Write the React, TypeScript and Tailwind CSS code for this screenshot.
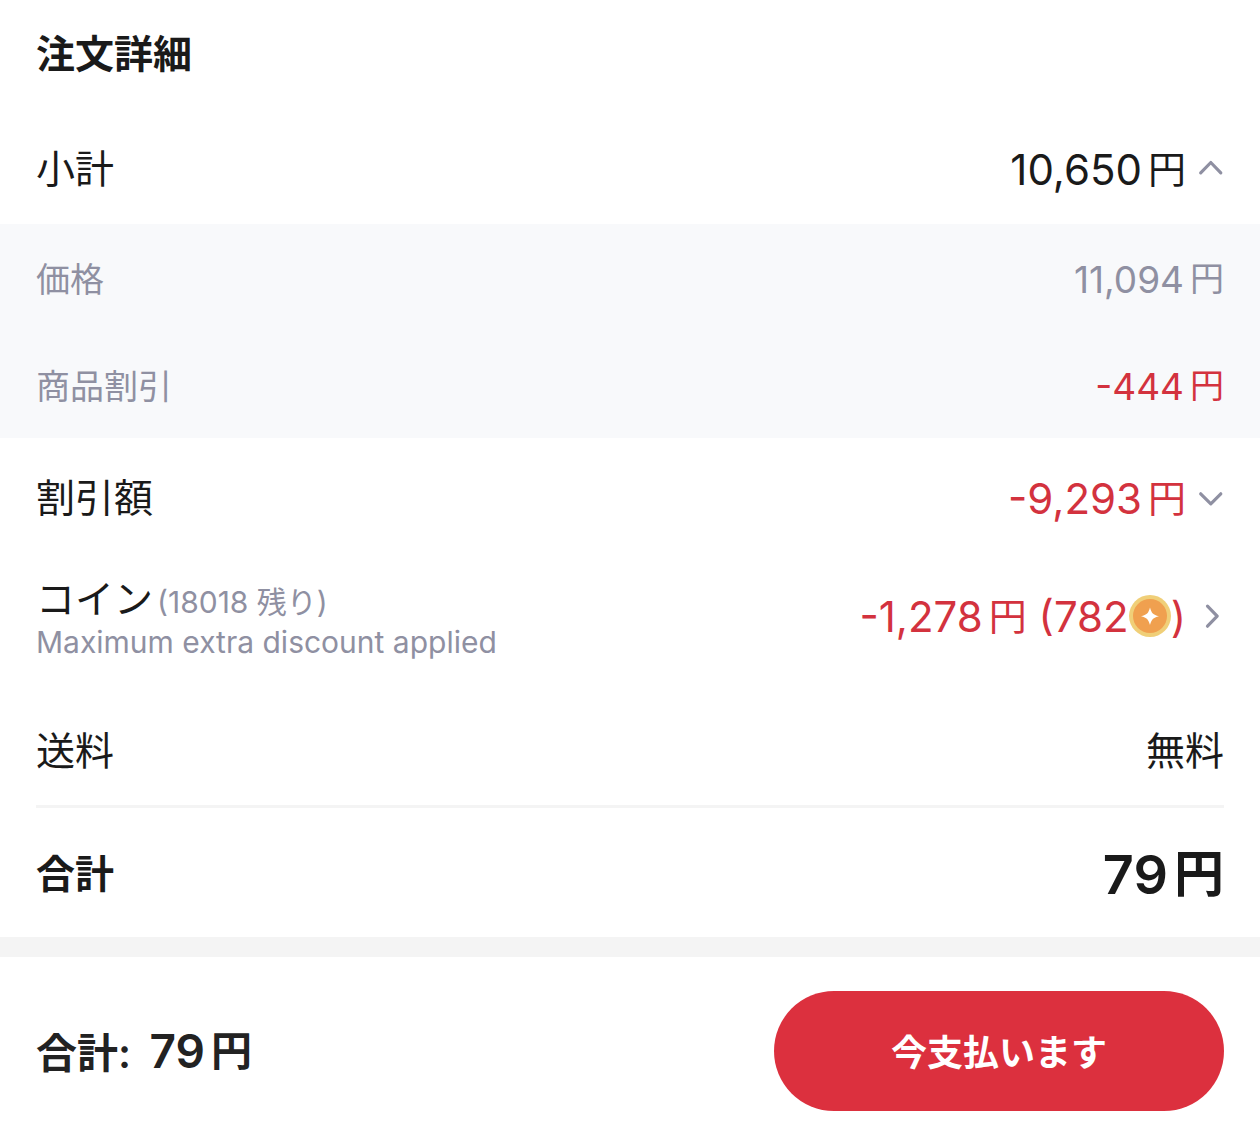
import type { ReactNode } from 'react';

function Yen({ amount, size = 'text-[38px]' }: { amount: string; size?: string }) {
  return (
    <span className="whitespace-nowrap">
      {amount}
      <span className={`ml-1.5 align-[2px] ${size}`}>円</span>
    </span>
  );
}

function Chevron({ direction }: { direction: 'up' | 'down' | 'right' }) {
  const points = {
    up: 'M2.700 16.800 12.800 6.500 22.800 16.800',
    down: 'M2.700 8.800 12.800 18.800 22.800 8.800',
    right: 'M9.500 3.200 19.200 13.200 9.500 23.200',
  };
  return (
    <svg viewBox="0 0 26 26" className="h-[26px] w-[26px] shrink-0" fill="none" stroke="#8f90a2" strokeWidth="3.200" aria-hidden="true">
      <path d={points[direction]} strokeLinecap="round" strokeLinejoin="round" />
    </svg>
  );
}

function CoinIcon() {
  return (
    <svg viewBox="0 0 42 42" className="h-[42px] w-[42px] shrink-0" aria-hidden="true">
      <circle cx="21" cy="21" r="21" fill="#f0cf78" />
      <circle cx="21" cy="21" r="17" fill="#f0a04f" />
      <path d="M21 12.500c1.600 5.800 3 7.200 9 8.800-6 1.600-7.400 3-9 8.800-1.600-5.800-3-7.200-9-8.800 6-1.600 7.400-3 9-8.800z" fill="#fff" />
    </svg>
  );
}

function Row({ label, className, children }: { label: string; className: string; children: ReactNode }) {
  return (
    <div className={`flex items-center justify-between px-9 ${className}`}>
      <span>{label}</span>
      {children}
    </div>
  );
}

export default function App() {
  return (
    <main className="w-full bg-white font-['Inter','Noto_Sans_CJK_JP',sans-serif] text-[#1a1a1a]">
      <h1 className="flex h-[112px] items-center px-9 pb-1 text-[39px] font-semibold">注文詳細</h1>

      <Row label="小計" className="h-[112px] pt-0.5 text-[39px]">
        <button type="button" className="flex items-center gap-3 text-[42px]" aria-expanded="true">
          <Yen amount="10,650" />
          <Chevron direction="up" />
        </button>
      </Row>

      <section className="bg-[#f8f9fb] text-[34px] text-[#8f90a2]">
        <Row label="価格" className="h-[107px] pt-1">
          <span className="text-[37px]"><Yen amount="11,094" size="text-[34px]" /></span>
        </Row>
        <Row label="商品割引" className="h-[107px] pt-1">
          <span className="text-[37px] text-[#d3323e]"><Yen amount="-444" size="text-[34px]" /></span>
        </Row>
      </section>

      <Row label="割引額" className="h-[120px] text-[39px]">
        <button type="button" className="flex items-center gap-3 text-[42px] text-[#d3323e]" aria-expanded="false">
          <Yen amount="-9,293" />
          <Chevron direction="down" />
        </button>
      </Row>

      <div className="flex h-[116px] items-center justify-between px-9">
        <div className="pt-2 leading-10">
          <p className="text-[39px]">
            コイン<span className="ml-1 text-[30px] text-[#8f90a2]">(18018 残り)</span>
          </p>
          <p className="text-[30px] text-[#8f90a2]">Maximum extra discount applied</p>
        </div>
        <button type="button" className="flex items-center gap-3 text-[42px] text-[#d3323e]">
          <span className="flex items-center whitespace-pre">
            <Yen amount="-1,278" /> (782<CoinIcon />)
          </span>
          <Chevron direction="right" />
        </button>
      </div>

      <Row label="送料" className="h-[131px] pt-6 text-[39px]">
        <span>無料</span>
      </Row>

      <hr className="mx-9 border-t-3 border-[#f4f4f4]" />

      <Row label="合計" className="h-[129px] pt-1 text-[39px] font-semibold">
        <span className="text-[54px]"><Yen amount="79" size="text-[50px]" /></span>
      </Row>

      <footer className="flex items-center justify-between border-t-20 border-[#f4f4f4] px-9 pt-[34px] pb-9">
        <p className="text-[41px] font-semibold text-[#222222]">
          合計: <span className="ml-2 text-[46px]"><Yen amount="79" size="text-[41px]" /></span>
        </p>
        <button type="button" className="h-[120px] w-[450px] rounded-full bg-[#dc303e] pt-1 text-[36px] font-semibold text-white">
          今支払います
        </button>
      </footer>
    </main>
  );
}
